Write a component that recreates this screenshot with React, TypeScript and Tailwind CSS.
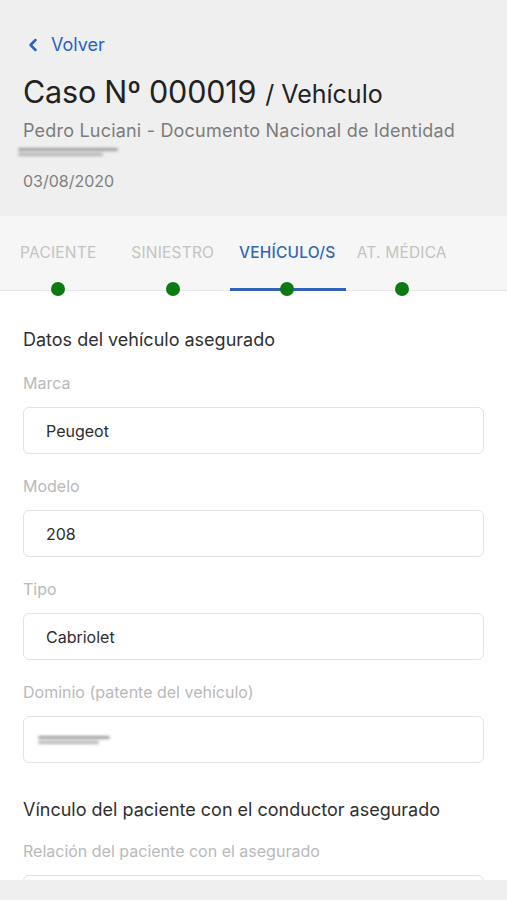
import { ChevronLeft } from "lucide-react";

const tabs = [
  { label: "PACIENTE", active: false },
  { label: "SINIESTRO", active: false },
  { label: "VEHÍCULO/S", active: true },
  { label: "AT. MÉDICA", active: false },
];

function Blurred({ className }: { className?: string }) {
  return (
    <div className={"flex h-[8px] flex-col justify-center gap-[2px] blur-[1.5px] " + (className ?? "")}>
      <div className="h-[3px] w-full rounded-full bg-[#9a9a9a]" />
      <div className="h-[3px] w-[85%] rounded-full bg-[#b0b0b0]" />
    </div>
  );
}

function Field({ label, value, blurred }: { label: string; value?: string; blurred?: boolean }) {
  return (
    <div className="flex flex-col">
      <label className="h-[22px] text-[16px] leading-[22px] text-[#b9b9b9]">{label}</label>
      <div className="mt-[13px] flex h-[47px] shrink-0 items-center rounded-[6px] border border-[#e3e3e3] bg-white px-[22px] text-[16px] text-[#2d2d2d]">
        {blurred ? <Blurred className="-ml-[8px] w-[72px]" /> : value}
      </div>
    </div>
  );
}

export default function App() {
  return (
    <div
      className="flex h-[900px] w-[507px] flex-col overflow-hidden bg-white"
      style={{ fontFamily: "Inter, 'Noto Sans', sans-serif" }}
    >
      {/* cabecera */}
      <header className="flex h-[216px] shrink-0 flex-col bg-[#efefef] px-[23px] pt-[33px]">
        <button className="flex items-center gap-[8px] text-[18px] leading-[24px] text-[#2a63c4]">
          <ChevronLeft className="h-[20px] w-[20px]" strokeWidth={3} />
          Volver
        </button>
        <h1 className="mt-[17px] flex items-baseline leading-[36px] text-[#222]">
          <span className="text-[30.5px] tracking-[-0.2px]">Caso Nº 000019</span>
          <span className="ml-[9px] text-[25px]">/ Vehículo</span>
        </h1>
        <p className="mt-[7px] text-[18px] leading-[24px] tracking-[0.2px] text-[#7c7c7c]">
          Pedro Luciani - Documento Nacional de Identidad
        </p>
        <Blurred className="-ml-[5px] mt-[5px] w-[100px]" />
        <p className="mt-[14px] text-[16px] leading-[22px] text-[#808080]">03/08/2020</p>
      </header>

      {/* pestañas */}
      <nav className="flex h-[75px] shrink-0 border-b border-[#e6e6e6] bg-[#f6f6f6] pl-[1px]">
        {tabs.map((t) => (
          <div key={t.label} className="relative flex w-[114.5px] flex-col items-center pt-[25px]">
            <span
              className={
                "text-[15.5px] tracking-[0.2px] " + (t.active ? "font-medium text-[#3566b7]" : "text-[#c3c3c3]")
              }
            >
              {t.label}
            </span>
            {t.active && <div className="absolute bottom-[-1px] left-0 right-[-1px] h-[3px] bg-[#2f62b8]" />}
            <div className="absolute bottom-[-6px] left-1/2 h-[14px] w-[14px] -translate-x-1/2 rounded-full bg-[#0b7a0f]" />
          </div>
        ))}
      </nav>

      {/* contenido */}
      <main className="flex min-h-0 flex-1 flex-col overflow-hidden px-[23px] pt-[36px]">
        <h2 className="text-[18px] leading-[26px] text-[#303030]">Datos del vehículo asegurado</h2>
        <div className="mt-[19px] flex flex-col gap-[21px]">
          <Field label="Marca" value="Peugeot" />
          <Field label="Modelo" value="208" />
          <Field label="Tipo" value="Cabriolet" />
          <Field label="Dominio (patente del vehículo)" blurred />
        </div>
        <h2 className="mt-[34px] text-[18px] leading-[26px] text-[#303030]">
          Vínculo del paciente con el conductor asegurado
        </h2>
        <div className="mt-[17px]">
          <Field label="Relación del paciente con el asegurado" value="" />
        </div>
      </main>

      <footer className="h-[20px] shrink-0 bg-[#efefef]" />
    </div>
  );
}
